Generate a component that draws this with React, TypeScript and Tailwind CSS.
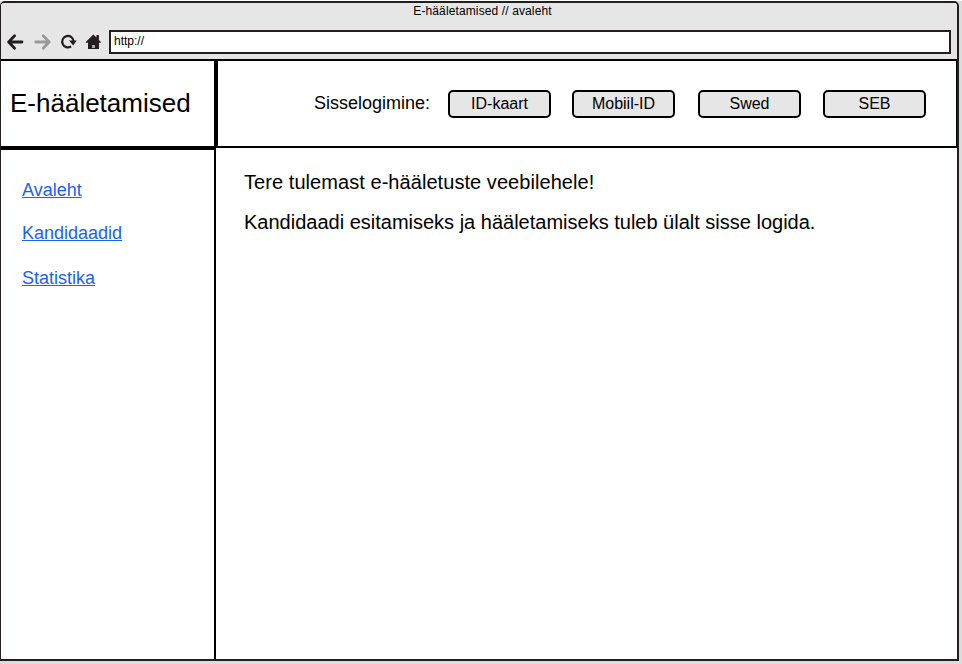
const logins = [
  { label: 'ID-kaart', gap: 'ml-[18px]' },
  { label: 'Mobiil-ID', gap: 'ml-[21px]' },
  { label: 'Swed', gap: 'ml-[23px]' },
  { label: 'SEB', gap: 'ml-[22px]' },
];

function Toolbar() {
  return (
    <div className="flex h-[26px] items-start">
      <svg className="ml-[5px] mt-[3px] h-[18px] w-[100px] shrink-0" viewBox="0 0 100 18" fill="none">
        <path d="M16 9H3M8.600 2.800L2.600 9l6 6.200" stroke="#231f20" strokeWidth="2.8" strokeLinecap="round" strokeLinejoin="round" />
        <path d="M29.800 9h13M37.200 2.800L43.200 9l-6 6.200" stroke="#999" strokeWidth="2.8" strokeLinecap="round" strokeLinejoin="round" />
        <path d="M65.100 13.400A5.700 5.700 0 1 1 67.600 8.400" stroke="#231f20" strokeWidth="2.2" />
        <path d="M63 7.600h7.700l-3.500 4.800z" fill="#231f20" />
        <path d="M79.800 9l7.500-7.600 3.200 3.200V2h2.400v5L94.900 9v.8H93V16H82V9.800h-2.200z" fill="#231f20" />
        <path d="M86 12h3v3h-3z" fill="#aaa" />
      </svg>
      <div className="ml-[3px] flex h-6 w-[842px] border-2 border-[#231f20] bg-white pl-[3px] text-[12px] leading-[18px]">http://</div>
    </div>
  );
}

export default function App() {
  return (
    <div className="h-[664px] w-[962px] overflow-hidden bg-[#dcdcdc] font-['Liberation_Sans',Arial,sans-serif] text-black">
      <div className="h-px bg-white" />
      <div className="flex h-[660px] w-[959px] flex-col overflow-hidden rounded-t-[5px] border-2 border-l border-[#231f20] bg-white">
        <div className="h-14 shrink-0 bg-[#e6e6e6]">
          <div className="ml-[7px] h-[27px] text-center text-[12px] leading-4 tracking-[0.12px]">E-hääletamised // avaleht</div>
          <Toolbar />
        </div>
        <div className="flex h-[89px] shrink-0">
          <div className="flex w-[217px] items-center border-r-4 border-t-2 border-black pb-[3px] pl-[9px] text-[26px]">E-hääletamised</div>
          <div className="flex flex-1 items-start border-b-2 border-r border-t-2 border-black pl-[96px] pt-[29px]">
            <span className="w-[116px] text-[18px] leading-[26px]">Sisselogimine:</span>
            {logins.map(({ label, gap }) => (
              <button key={label} className={`${gap} h-7 w-[103px] shrink-0 rounded-[5px] border-2 border-black bg-[#e6e6e6] text-[16px] leading-[22px]`}>
                {label}
              </button>
            ))}
          </div>
        </div>
        <div className="flex flex-1">
          <nav className="-mt-0.5 flex w-[215px] shrink-0 flex-col items-start border-r-2 border-t-4 border-black pl-[21px] pt-[30px] text-[18px] leading-5 text-[#1a62ed]">
            <a className="underline">Avaleht</a>
            <a className="mt-[23px] underline">Kandidaadid</a>
            <a className="mt-[25px] underline">Statistika</a>
          </nav>
          <main className="pl-7 pt-[22px] text-[20px] leading-6">
            <p className="tracking-[0.06px]">Tere tulemast e-hääletuste veebilehele!</p>
            <p className="mt-4">Kandidaadi esitamiseks ja hääletamiseks tuleb ülalt sisse logida.</p>
          </main>
        </div>
      </div>
      <div className="h-[3px]" />
    </div>
  );
}
